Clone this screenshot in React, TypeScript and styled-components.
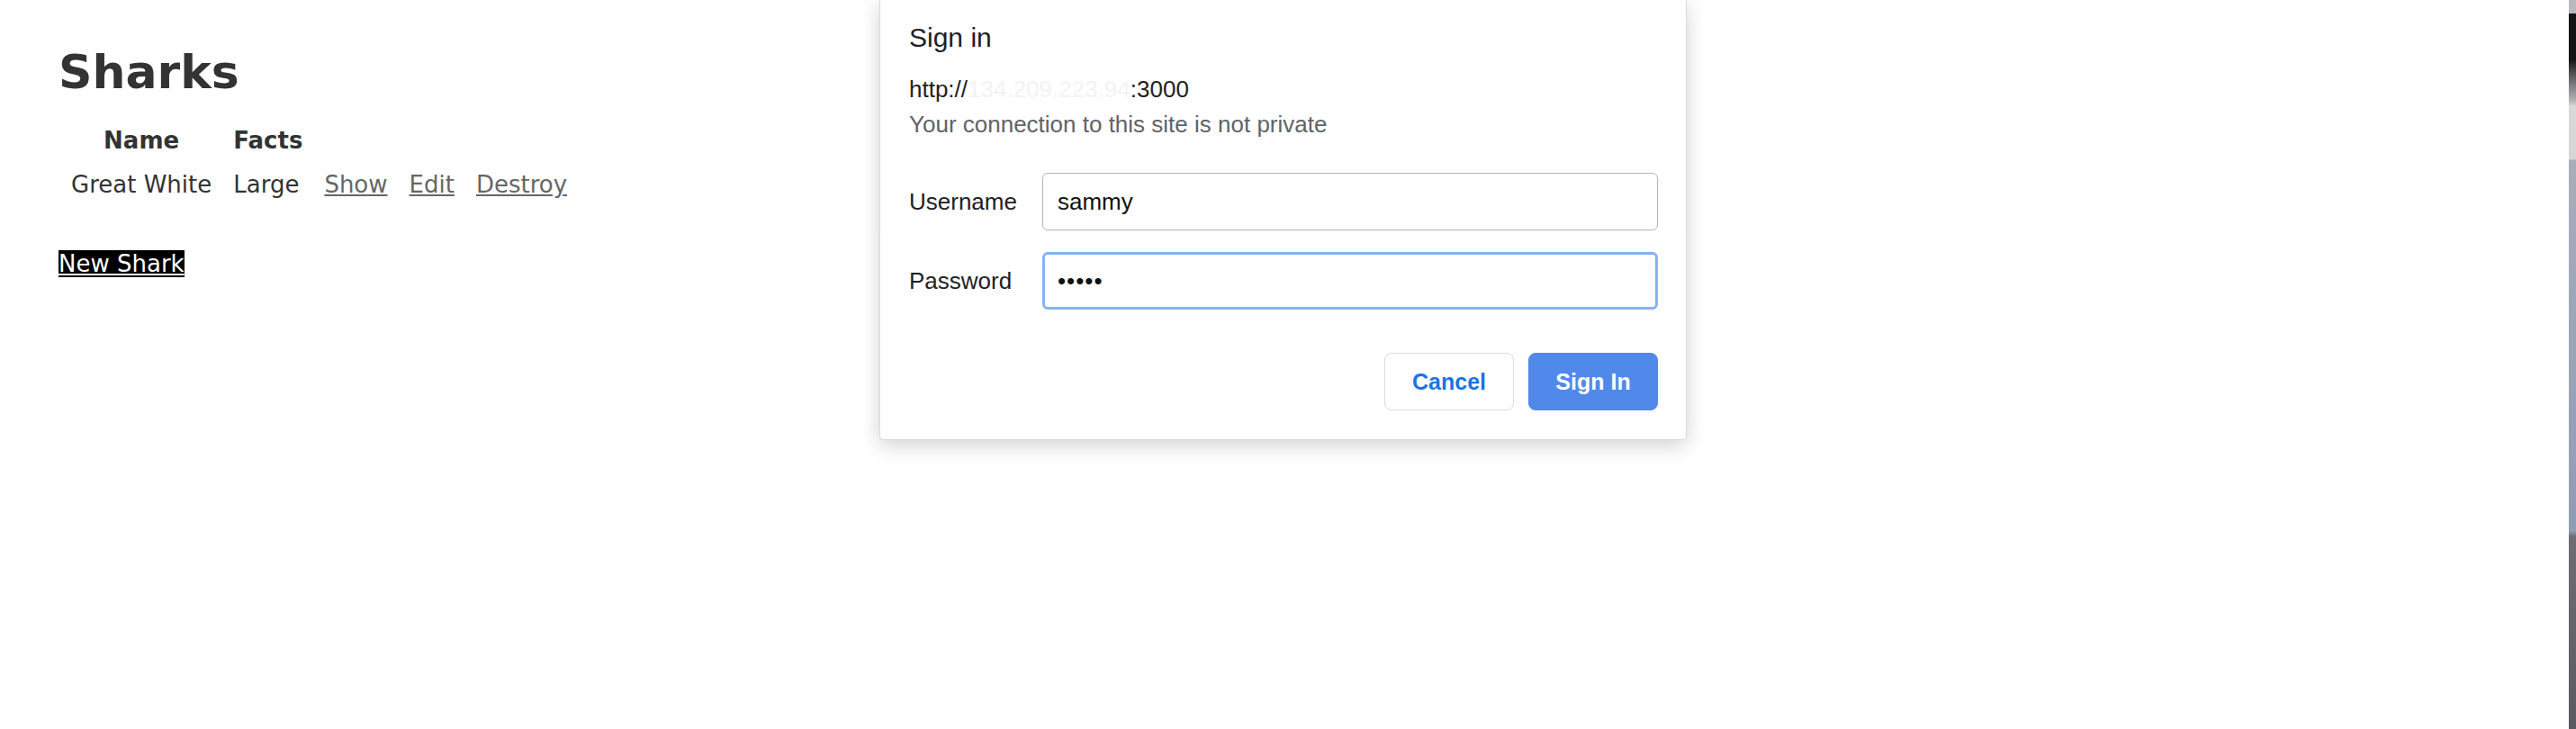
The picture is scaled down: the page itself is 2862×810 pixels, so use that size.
import styled, { createGlobalStyle } from "styled-components";

const GlobalStyle = createGlobalStyle`
  html, body {
    margin: 0;
    padding: 0;
    background: #fff;
  }
  body {
    width: 2862px;
    height: 810px;
    overflow: hidden;
  }
`;

const Screen = styled.div`
  display: flex;
  width: 2862px;
  height: 810px;
`;

const Browser = styled.main`
  position: relative;
  flex: 1;
  box-sizing: border-box;
  padding: 50px 0 0 65px;
  background: #fff;
  color: #333;
  font-family: "DejaVu Sans", Verdana, sans-serif;
`;

const Desktop = styled.div`
  width: 8px;
  background: linear-gradient(
    to bottom,
    #b9b9bd 0px,
    #b9b9bd 15px,
    #141414 15px,
    #141414 66px,
    #5a5a5c 84px,
    #b4b4b8 112px,
    #d9d9d9 118px,
    #d6d6d6 177px,
    #a9adbb 178px,
    #9aa5b9 380px,
    #8e9cb4 590px,
    #6f6c77 596px,
    #5c5961 810px
  );
`;

const Title = styled.h1`
  margin: 0;
  font-size: 52px;
  line-height: 60px;
  font-weight: bold;
`;

const Table = styled.table`
  margin: 22px 0 0 2px;
  border-collapse: collapse;
  font-size: 26px;
  line-height: 39px;

  th,
  td {
    padding: 5px 12px;
  }
  th {
    font-weight: bold;
    text-align: center;
  }
  td {
    text-align: left;
  }
`;

const RowLink = styled.a`
  color: #666;
  text-decoration: underline;
  cursor: pointer;
`;

const Footer = styled.p`
  margin: 44px 0 0;
  font-size: 26px;
  line-height: 39px;
`;

const NewLink = styled.a`
  background: #000;
  color: #fff;
  text-decoration: underline;
  cursor: pointer;
`;

const Dialog = styled.div`
  position: absolute;
  top: 0;
  left: 977px;
  width: 897px;
  box-sizing: border-box;
  padding: 24px 31px 32px 32px;
  background: #fff;
  border: 1px solid rgba(0, 0, 0, 0.14);
  border-top: none;
  border-radius: 0 0 5px 5px;
  box-shadow: 0 6px 22px rgba(0, 0, 0, 0.18);
  font-family: "Liberation Sans", Arial, sans-serif;
  color: #202124;
`;

const DialogTitle = styled.h2`
  margin: 0;
  font-size: 30px;
  line-height: 36px;
  font-weight: normal;
`;

const Origin = styled.div`
  margin-top: 23px;
  font-size: 26px;
  line-height: 32px;
`;

/* the address is blurred out in the screenshot */
const Hidden = styled.span`
  color: #f3f3f3;
`;

const Note = styled.div`
  margin-top: 7px;
  font-size: 26px;
  line-height: 32px;
  color: #5f6368;
`;

const Form = styled.div`
  display: grid;
  grid-template-columns: 148px 1fr;
  row-gap: 24px;
  align-items: center;
  margin-top: 38px;
`;

const Label = styled.label`
  font-size: 26px;
  line-height: 32px;
`;

const Field = styled.input<{ $focused?: boolean }>`
  box-sizing: border-box;
  width: 100%;
  height: 64px;
  margin: 0;
  border: ${(p) => (p.$focused ? "3px solid #8ab1f3" : "1px solid #b4b4b4")};
  padding: 0 0 0 ${(p) => (p.$focused ? "14px" : "16px")};
  border-radius: 6px;
  outline: none;
  background: #fff;
  color: #111;
  font-family: "Liberation Sans", Arial, sans-serif;
  font-size: 26px;
  letter-spacing: ${(p) => (p.$focused ? "1px" : "0")};
`;

const Actions = styled.div`
  display: flex;
  justify-content: flex-end;
  gap: 16px;
  margin-top: 48px;
`;

const Button = styled.button<{ $primary?: boolean }>`
  width: 144px;
  height: 64px;
  box-sizing: border-box;
  border-radius: 8px;
  border: 1px solid ${(p) => (p.$primary ? "#5189ea" : "#dadce0")};
  background: ${(p) => (p.$primary ? "#5189ea" : "#fff")};
  color: ${(p) => (p.$primary ? "#fff" : "#1a73e8")};
  font-family: "Liberation Sans", Arial, sans-serif;
  font-size: 25px;
  font-weight: bold;
  cursor: pointer;
`;

const sharks = [{ name: "Great White", facts: "Large" }];

export default function App() {
  return (
    <>
      <GlobalStyle />
      <Screen>
        <Browser>
          <Title>Sharks</Title>
          <Table>
            <thead>
              <tr>
                <th>Name</th>
                <th>Facts</th>
                <th colSpan={3}></th>
              </tr>
            </thead>
            <tbody>
              {sharks.map((shark) => (
                <tr key={shark.name}>
                  <td>{shark.name}</td>
                  <td>{shark.facts}</td>
                  <td>
                    <RowLink>Show</RowLink>
                  </td>
                  <td>
                    <RowLink>Edit</RowLink>
                  </td>
                  <td>
                    <RowLink>Destroy</RowLink>
                  </td>
                </tr>
              ))}
            </tbody>
          </Table>
          <Footer>
            <NewLink>New Shark</NewLink>
          </Footer>

          <Dialog>
            <DialogTitle>Sign in</DialogTitle>
            <Origin>
              http://<Hidden>134.209.223.94</Hidden>:3000
            </Origin>
            <Note>Your connection to this site is not private</Note>
            <Form>
              <Label>Username</Label>
              <Field type="text" value="sammy" readOnly />
              <Label>Password</Label>
              <Field type="password" value="sammy" readOnly $focused />
            </Form>
            <Actions>
              <Button>Cancel</Button>
              <Button $primary>Sign In</Button>
            </Actions>
          </Dialog>
        </Browser>
        <Desktop />
      </Screen>
    </>
  );
}
